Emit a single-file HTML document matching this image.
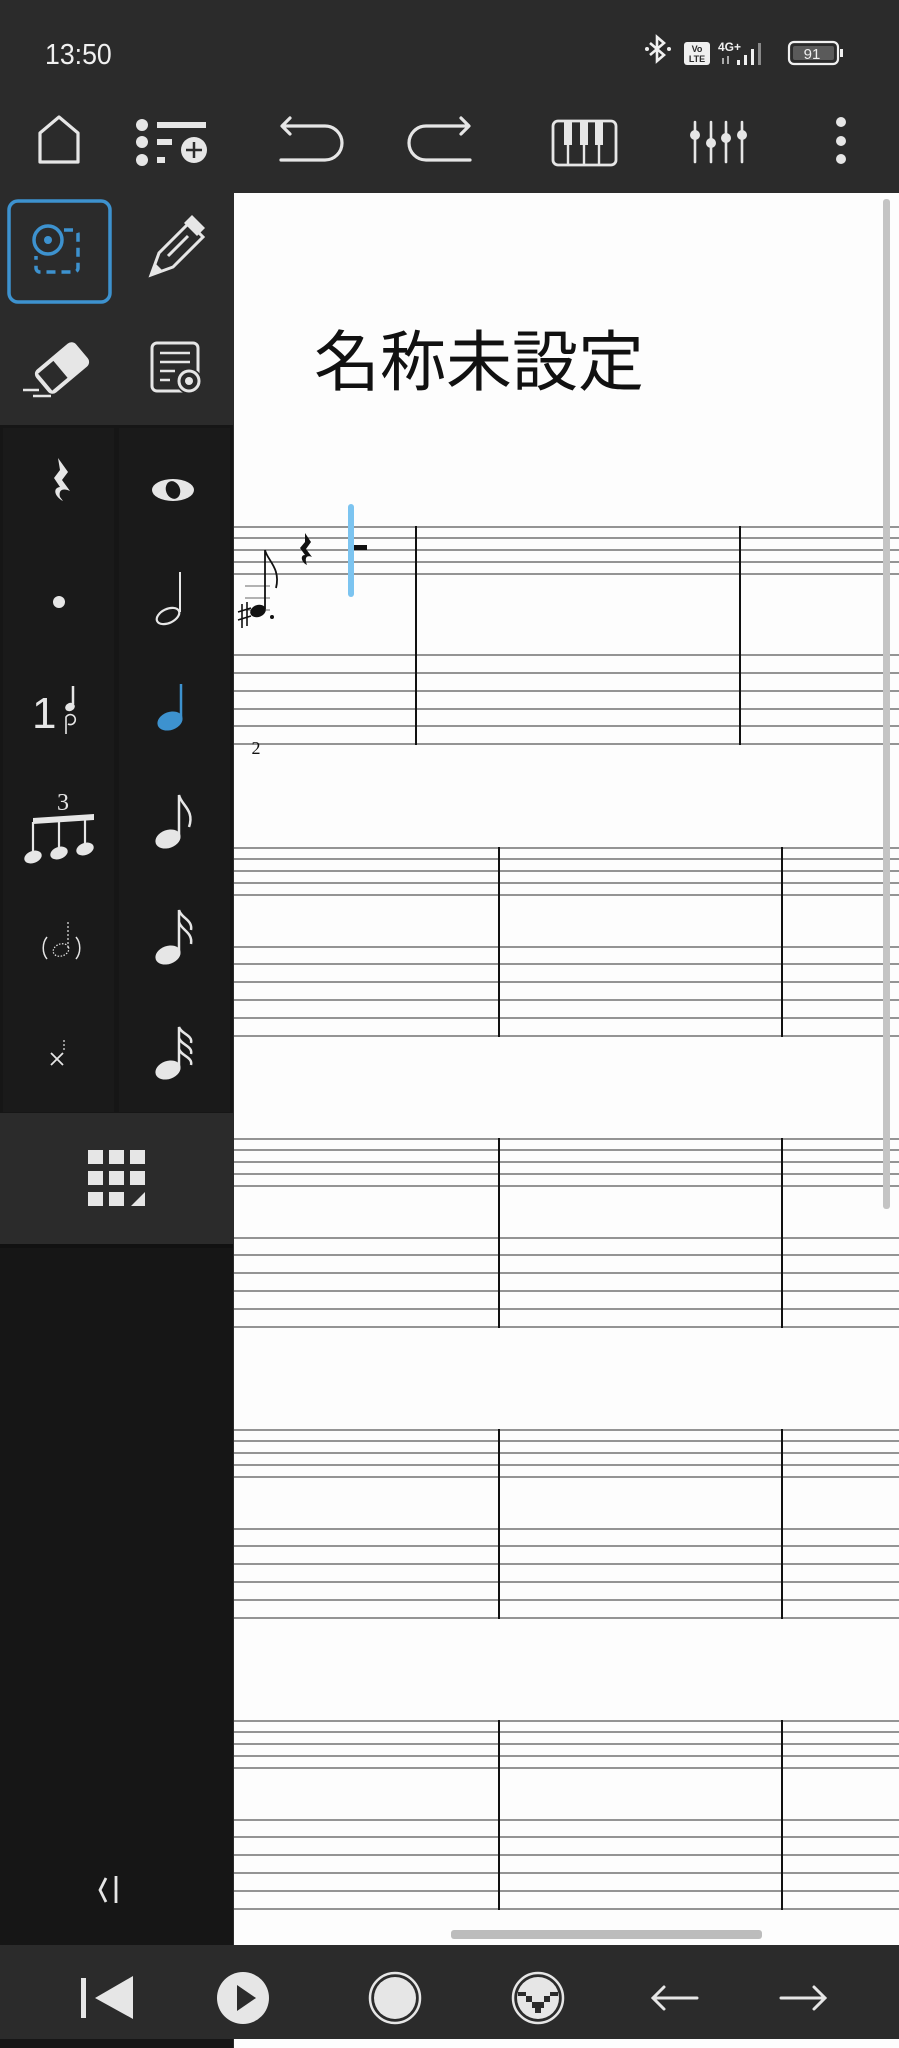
<!DOCTYPE html>
<html><head><meta charset="utf-8"><style>
html,body{margin:0;padding:0;background:#2b2b2b;}
body{width:899px;height:2048px;overflow:hidden;}
svg{display:block}
</style></head><body>
<svg width="899" height="2048" viewBox="0 0 899 2048" xmlns="http://www.w3.org/2000/svg" font-family="Liberation Sans, sans-serif">
<rect x="0" y="0" width="899" height="2048" fill="#2b2b2b"/>
<!-- status bar -->
<text x="45" y="64" fill="#f0f0f0" font-size="29" transform="translate(45 0) scale(0.92 1) translate(-45 0)">13:50</text>
<g fill="#f0f0f0" stroke="none">
<path d="M650 43 l14 12 l-7 6 v-24 l7 6 l-14 12" fill="none" stroke="#f0f0f0" stroke-width="2.6"/>
<circle cx="647" cy="49" r="2"/><circle cx="669" cy="49" r="2"/>
<rect x="684" y="42" width="26" height="23" rx="3"/>
<text x="697" y="52" font-size="9" font-weight="bold" fill="#2b2b2b" text-anchor="middle">Vo</text>
<text x="697" y="62" font-size="9" font-weight="bold" fill="#2b2b2b" text-anchor="middle">LTE</text>
<text x="718" y="51" font-size="12" font-weight="bold">4G+</text>
<rect x="737" y="60" width="3" height="5"/><rect x="744" y="55" width="3" height="10"/><rect x="751" y="49" width="3" height="16"/><rect x="758" y="43" width="3" height="22" fill="#888"/>
<rect x="722" y="58" width="2" height="6" fill="#aaa"/><rect x="727" y="56" width="2" height="8" fill="#aaa"/>
</g>
<rect x="789" y="42" width="49" height="22" rx="5" fill="none" stroke="#f0f0f0" stroke-width="2.2"/>
<rect x="793" y="46" width="41" height="14" rx="2" fill="#5a5a5a"/>
<rect x="840" y="49" width="3" height="8" fill="#f0f0f0"/>
<text x="812" y="59" font-size="15" fill="#f0f0f0" text-anchor="middle">91</text>

<!-- toolbar -->
<g fill="none" stroke="#e6e6e6" stroke-width="3.2" stroke-linejoin="round" stroke-linecap="round">
<path d="M40 162 V133 L59 117 L78 133 V162 Z"/>
<path d="M290 118 l-8 8 l8 8 M283 126 H325 a17 17 0 0 1 0 34 H281"/>
<path d="M461 118 l8 8 l-8 8 M468 126 H426 a17 17 0 0 0 0 34 H470"/>
<rect x="553" y="121" width="63" height="44" rx="5" stroke-width="2.8"/>
<path d="M568 145 V164 M584 145 V164 M599 145 V164" stroke-width="2.4"/>
<path d="M695 122 V162 M711 122 V162 M726 122 V162 M742 122 V162" stroke-width="2.6"/>
</g>
<g fill="#e6e6e6">
<circle cx="142" cy="125" r="6"/><circle cx="142" cy="142" r="6"/><circle cx="142" cy="160" r="6"/>
<rect x="157" y="122" width="49" height="6"/><rect x="157" y="139" width="15" height="6"/><rect x="157" y="157" width="8" height="6"/>
<circle cx="194" cy="150" r="13"/>
<rect x="564" y="121" width="8" height="24"/><rect x="580" y="121" width="8" height="24"/><rect x="595" y="121" width="8" height="24"/>
<circle cx="695" cy="135" r="5"/><circle cx="711" cy="143" r="5"/><circle cx="726" cy="138" r="5"/><circle cx="742" cy="135" r="5"/>
<circle cx="841" cy="122" r="5"/><circle cx="841" cy="141" r="5"/><circle cx="841" cy="159" r="5"/>
</g>
<path d="M194 142 V158 M186 150 H202" stroke="#2b2b2b" stroke-width="2.5"/>

<!-- left panel -->
<rect x="0" y="193" width="233" height="232" fill="#2b2b2b"/>
<rect x="0" y="425" width="233" height="1522" fill="#161616"/>
<rect x="3" y="428" width="111" height="684" fill="#1a1a1a"/>
<rect x="119" y="428" width="111" height="684" fill="#1a1a1a"/>
<rect x="0" y="1113" width="233" height="131" fill="#2b2b2b"/>
<rect x="0" y="1244" width="233" height="4" fill="#111"/>
<rect x="9" y="201" width="101" height="101" rx="9" fill="none" stroke="#3d92cf" stroke-width="3.5"/>
<g stroke="#3d92cf" stroke-width="3.5" fill="none">
<circle cx="48" cy="240" r="14"/>
<path d="M64 230 h10 a4 4 0 0 1 4 4 v34 a4 4 0 0 1 -4 4 h-34 a4 4 0 0 1 -4 -4 v-12" stroke-dasharray="9 6"/>
</g>
<circle cx="48" cy="240" r="4" fill="#3d92cf"/>
<!-- pencil -->
<g fill="none" stroke="#e6e6e6" stroke-width="3">
<path d="M151 275 l8 -22 l30 -30 l14 14 l-30 30 z"/>
<path d="M168 256 l20 -20"/>
</g>
<path d="M184 223 l8 -8 l13 13 l-8 8 z" fill="#e6e6e6"/>
<path d="M151 275 l4 -12 l8 8 z" fill="#e6e6e6"/>
<!-- eraser -->
<g transform="translate(62,368) rotate(-40)">
<rect x="-26" y="-15" width="52" height="30" rx="6" fill="#e6e6e6"/>
<rect x="-22" y="-11" width="20" height="22" fill="#2b2b2b"/>
</g>
<path d="M23 390 h16 M33 396 h18" stroke="#e6e6e6" stroke-width="2.5"/>
<!-- doc -->
<rect x="152" y="343" width="46" height="48" rx="5" fill="none" stroke="#e6e6e6" stroke-width="3"/>
<path d="M160 353 h30 M160 362 h30 M160 371 h15 M160 380 h10" stroke="#e6e6e6" stroke-width="2.5"/>
<circle cx="189" cy="381" r="13" fill="#2b2b2b"/>
<circle cx="189" cy="381" r="10" fill="none" stroke="#e6e6e6" stroke-width="3"/>
<circle cx="189" cy="381" r="4" fill="#e6e6e6"/>

<!-- palette icons -->
<g fill="#e6e6e6">
<path d="M58 458 l10 14 l-6 8 l8 11 c-6 -3 -12 -2 -10 6 l3 4 c-8 -4 -11 -13 -3 -14 l-6 -9 l6 -8 z"/>
<ellipse cx="173" cy="490" rx="21" ry="11"/>
<circle cx="59" cy="602" r="6"/>
<text x="32" y="728" font-size="44" font-family="Liberation Sans, sans-serif">1</text>
<ellipse cx="70" cy="707" rx="5" ry="4" transform="rotate(-25 70 707)"/>
<text x="63" y="810" font-size="24" font-family="Liberation Serif, serif" text-anchor="middle">3</text>
<path d="M33 852 V818 l61 -4 v6 l-61 4" />
<ellipse cx="33" cy="857" rx="9" ry="6" transform="rotate(-20 33 857)"/>
<ellipse cx="59" cy="853" rx="9" ry="6" transform="rotate(-20 59 853)"/>
<ellipse cx="85" cy="849" rx="9" ry="6" transform="rotate(-20 85 849)"/>
<ellipse cx="168" cy="839" rx="13" ry="9" transform="rotate(-20 168 839)"/>
<ellipse cx="168" cy="955" rx="13" ry="9" transform="rotate(-20 168 955)"/>
<ellipse cx="168" cy="1070" rx="13" ry="9" transform="rotate(-20 168 1070)"/>
</g>
<ellipse cx="173" cy="490" rx="7" ry="9" transform="rotate(-20 173 490)" fill="#1a1a1a"/>
<ellipse cx="170" cy="721" rx="13" ry="9" transform="rotate(-20 170 721)" fill="#3d92cf"/>
<path d="M181 717 V684" stroke="#3d92cf" stroke-width="2.5"/>
<g fill="none" stroke="#e6e6e6" stroke-width="2.5">
<path d="M73 704 V686"/>
<path d="M66 734 V717 a5 5 0 1 1 2 7" stroke-width="1.6"/>
<path d="M33 852 V822 M59 848 V820 M85 844 V818" stroke-width="2.2"/>
<ellipse cx="168" cy="616" rx="12" ry="7" transform="rotate(-25 168 616)" stroke-width="2.2"/>
<path d="M180 612 V572" stroke-width="2"/>
<path d="M179 836 V795 c2 10 16 15 10 32" stroke-width="2.5"/>
<path d="M179 952 V910 c2 8 14 10 12 20 M179 922 c2 8 14 10 12 22" stroke-width="2.5"/>
<path d="M179 1067 V1027 c2 7 14 8 12 16 M179 1038 c2 7 14 8 12 16 M179 1049 c2 7 14 8 12 16" stroke-width="2.5"/>
<path d="M47 937 c-5 6 -5 16 0 22 M76 937 c5 6 5 16 0 22" stroke-width="1.5"/>
<ellipse cx="61" cy="950" rx="8" ry="6" transform="rotate(-20 61 950)" stroke-dasharray="1.5 1.5" stroke-width="1.2"/>
<path d="M68 948 V922" stroke-dasharray="2 2" stroke-width="1.2"/>
<path d="M51 1053 l12 12 M63 1053 l-12 12" stroke-width="1.8"/>
<path d="M64 1040 V1050" stroke-dasharray="2 2" stroke-width="1.2"/>
</g>
<!-- grid -->
<g fill="#e6e6e6">
<rect x="88" y="1150" width="15" height="14"/><rect x="109" y="1150" width="15" height="14"/><rect x="130" y="1150" width="15" height="14"/>
<rect x="88" y="1171" width="15" height="14"/><rect x="109" y="1171" width="15" height="14"/><rect x="130" y="1171" width="15" height="14"/>
<rect x="88" y="1192" width="15" height="14"/><rect x="109" y="1192" width="15" height="14"/>
<path d="M145 1192 V1206 H131 Z"/>
</g>
<!-- collapse -->
<path d="M106 1878 l-6 12 l6 12 M116 1876 V1903" stroke="#e6e6e6" stroke-width="2.8" fill="none"/>

<!-- score -->
<rect x="234" y="193" width="665" height="1752" fill="#fdfdfd"/>
<text x="314" y="385" font-size="66" fill="#111" font-family="Liberation Sans, 'Noto Sans CJK JP', sans-serif">名称未設定</text>

<g stroke="#555" stroke-width="1.2">
<path d="M234 527 H899 M234 538 H899 M234 550 H899 M234 562 H899 M234 574 H899"/>
<path d="M234 655 H899 M234 673 H899 M234 691 H899 M234 709 H899 M234 726 H899 M234 744 H899"/>
</g>
<path d="M416 526 V745 M740 526 V745" stroke="#111" stroke-width="2"/>
<text x="256" y="754" font-size="18" font-family="Liberation Serif, serif" text-anchor="middle" fill="#111">2</text>

<g id="sys">
<g stroke="#555" stroke-width="1.2">
<path d="M234 848 H899 M234 859 H899 M234 871 H899 M234 883 H899 M234 895 H899"/>
<path d="M234 947 H899 M234 964 H899 M234 982 H899 M234 1000 H899 M234 1018 H899 M234 1036 H899"/>
</g>
<path d="M499 847 V1037 M782 847 V1037" stroke="#111" stroke-width="2"/>
</g>
<use href="#sys" y="291"/>
<use href="#sys" y="582"/>
<use href="#sys" y="873"/>
<rect x="883" y="199" width="7" height="1010" rx="3" fill="#c4c4c4"/>
<rect x="451" y="1930" width="311" height="9" rx="3" fill="#bcbcbc"/>

<!-- notes on system 1 -->
<path d="M245 586 h25 M245 598 h25 M245 610 h25" stroke="#666" stroke-width="1"/>
<ellipse cx="258" cy="611" rx="8" ry="6" transform="rotate(-20 258 611)" fill="#111"/>
<path d="M265 609 V550 c2 10 16 18 11 38" stroke="#111" stroke-width="1.8" fill="none"/>
<circle cx="272" cy="617" r="2" fill="#111"/>
<path d="M242 604 v24 M247 602 v24 M238 612 l13 -4 M238 620 l13 -4" stroke="#111" stroke-width="1.6"/>
<path d="M305 533 l6 9 l-5 7 l6 8 c-5 -2 -8 0 -5 8 c-6 -3 -7 -10 -2 -10 l-5 -7 l5 -6 z" fill="#111"/>
<rect x="348" y="504" width="6" height="93" rx="3" fill="#7cc4f0"/>
<rect x="354" y="545" width="13" height="5" fill="#111"/>

<!-- bottom bar -->
<rect x="0" y="1945" width="899" height="94" fill="#2b2b2b"/>
<rect x="0" y="2039" width="233" height="9" fill="#161616"/>
<rect x="234" y="2039" width="665" height="9" fill="#fdfdfd"/>
<g fill="#e6e6e6">
<rect x="81" y="1978" width="5" height="40"/>
<path d="M133 1976 V2019 L95 1998 Z"/>
<circle cx="243" cy="1998" r="26"/>
<circle cx="395" cy="1998" r="21"/>
<circle cx="538" cy="1998" r="21"/>
</g>
<path d="M237 1985 V2011 L256 1998 Z" fill="#2b2b2b"/>
<circle cx="395" cy="1998" r="25" fill="none" stroke="#e6e6e6" stroke-width="2.5"/>
<circle cx="538" cy="1998" r="25" fill="none" stroke="#e6e6e6" stroke-width="2.5"/>
<g fill="#2b2b2b">
<rect x="526" y="1996" width="6" height="6"/><rect x="544" y="1996" width="6" height="6"/><rect x="532" y="2002" width="12" height="6"/><rect x="535" y="2008" width="6" height="5"/>
<rect x="518" y="1992" width="8" height="4"/><rect x="550" y="1992" width="8" height="4"/>
</g>
<g stroke="#e6e6e6" stroke-width="3" fill="none" stroke-linecap="round">
<path d="M697 1998 H653 M664 1987 l-11 11 l11 11"/>
<path d="M781 1998 H825 M814 1987 l11 11 l-11 11"/>
</g>
</svg>
</body></html>
